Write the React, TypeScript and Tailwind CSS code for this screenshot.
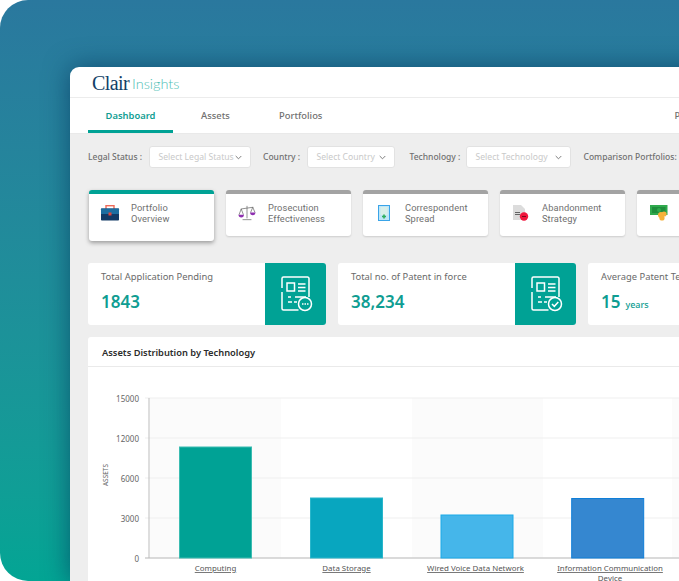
import React from "react";

const Chevron = () => (
  <svg width="7" height="5" viewBox="0 0 7 5" fill="none" stroke="#6f6f6f" strokeWidth="0.9" className="shrink-0">
    <path d="M0.7 1l2.800 2.800L6.300 1" />
  </svg>
);

function Select({ width, text }: { width: string; text: string }) {
  return (
    <div className={`${width} flex h-[22px] shrink-0 items-center justify-between rounded-[3px] border border-[#e2e2e2] bg-white pl-[9px] pr-[8px]`}>
      <span className="whitespace-nowrap text-[8.6px] font-normal text-[#c9c9c9]">{text}</span>
      <Chevron />
    </div>
  );
}

const Briefcase = () => (
  <svg width="20" height="16" viewBox="0 0 20 16">
    <rect x="6" y="0.7" width="8" height="4" fill="none" stroke="#ef6a58" strokeWidth="1.4" />
    <rect x="1" y="3.5" width="18" height="12" rx="0.8" fill="#123a66" />
    <rect x="1" y="3.5" width="18" height="5.5" fill="#1c6da0" />
    <rect x="8.5" y="7.5" width="3" height="3" fill="#e2453c" />
  </svg>
);
const Scales = () => (
  <svg width="18" height="16" viewBox="0 0 20 18">
    <path d="M10 1v14M5 16.5h10M3 4.5l14-2M3.5 4.5L1 11M3.5 4.5L6 11M16.5 2.5L14 8.5M16.5 2.5L19 8.5" stroke="#666" strokeWidth="0.8" fill="none" />
    <path d="M0.5 11h6a3 3 0 0 1-6 0z" fill="#8e2fb0" />
    <path d="M13.5 8.5h6a3 3 0 0 1-6 0z" fill="#8e2fb0" />
  </svg>
);
const Doc = () => (
  <svg width="12" height="16" viewBox="0 0 12 16">
    <rect x="0.5" y="0.5" width="11" height="15" fill="#bfe6f7" stroke="#3aa4e8" strokeWidth="1" />
    <rect x="2.5" y="2" width="7" height="8" fill="#d9efe9" />
    <path d="M6 9.5v4M4 11.5h4" stroke="#2fae5c" strokeWidth="1.6" />
  </svg>
);
const Abandon = () => (
  <svg width="16" height="17" viewBox="0 0 16 17">
    <path d="M0 0h8l4 4v11H0z" fill="#dcdcdc" />
    <path d="M2 7.5h5M2 9.5h5" stroke="#555" strokeWidth="0.9" />
    <circle cx="11" cy="11.5" r="4.2" fill="#f0173d" />
    <path d="M9 11.5h4" stroke="#7a0a1e" strokeWidth="1" />
  </svg>
);
const Money = () => (
  <svg width="18" height="16" viewBox="0 0 18 16">
    <rect x="0" y="0" width="17.5" height="10" fill="#2faa4d" />
    <rect x="2" y="2" width="13.5" height="6" fill="#1f8e3c" />
    <circle cx="9" cy="5" r="2" fill="#2faa4d" />
    <circle cx="11" cy="10" r="3" fill="#f6b23a" />
    <circle cx="14" cy="9" r="2.6" fill="#f6b23a" />
    <circle cx="12" cy="13" r="2.6" fill="#f6b23a" />
  </svg>
);

function ReportIcon({ badge }: { badge: "dots" | "check" }) {
  return (
    <svg width="32" height="36" viewBox="0 0 32 36" fill="none" stroke="#fff" strokeWidth="1.5" className="ml-[3px]">
      <path d="M1 12V2.500a1.500 1.500 0 0 1 1.500-1.500h24a1.500 1.500 0 0 1 1.500 1.500V21M1 16v16.500a1.500 1.500 0 0 0 1.500 1.500h15" />
      <rect x="6" y="7" width="7.500" height="8" />
      <path d="M17 8h7.500M17 11.500h7.500M17 15h7.500" />
      <path d="M7 21h3M14 21h11M7 26h4M13 26h3" />
      <circle cx="24" cy="28" r="6.500" fill="#00a295" />
      {badge === "dots" ? (
        <path d="M21 28h1.500M23.500 28H25M26 28h1.500" strokeWidth="1.500" />
      ) : (
        <path d="M21 28l2.300 2.300 4-4.300" strokeWidth="1.500" />
      )}
    </svg>
  );
}

function TabCard({
  icon,
  lines,
  active,
  iconBox,
}: {
  icon: React.ReactNode;
  lines?: [string, string];
  active?: boolean;
  iconBox: string;
}) {
  return (
    <div
      className={`flex w-[125.500px] shrink-0 items-start self-start rounded-[3px] border-t-4 bg-white ${
        active
          ? "h-[51px] border-[#00a295] shadow-[0_2px_4px_rgba(0,0,0,0.35)]"
          : "h-[46px] border-[#a3a3a3] shadow-[0_1px_2px_rgba(0,0,0,0.14)]"
      }`}
    >
      <div className={`${iconBox} flex h-[38px] w-[42.500px] shrink-0 items-center justify-center`}>{icon}</div>
      {lines && (
        <div className="pt-[8px] font-['Roboto',sans-serif] text-[9.300px] leading-[11px] tracking-[0.1px] text-[#707070]">
          <div>{lines[0]}</div>
          <div>{lines[1]}</div>
        </div>
      )}
    </div>
  );
}

function Kpi({
  title,
  value,
  unit,
  badge,
  width,
}: {
  title: string;
  value: string;
  unit?: string;
  badge?: "dots" | "check";
  width: string;
}) {
  return (
    <div className={`${width} flex h-[62px] shrink-0 justify-between overflow-hidden rounded-[3px] bg-white`}>
      <div className="pl-[13px] pt-[8px]">
        <div className="whitespace-nowrap text-[9.400px] leading-[12px] text-[#6a6a6a]">{title}</div>
        <div className="mt-[9px] whitespace-nowrap text-[17px] font-semibold leading-[20px] text-[#0f9d92]">
          {value}
          {unit && <span className="ml-[5px] text-[9px] font-medium">{unit}</span>}
        </div>
      </div>
      {badge && (
        <div className="flex h-full w-[61px] shrink-0 items-center justify-center bg-[#00a295]">
          <ReportIcon badge={badge} />
        </div>
      )}
    </div>
  );
}

function Chart() {
  const left = 62;
  const bands = [62, 324, 584];
  const grid = [
    [61, "15000"],
    [101, "12000"],
    [141, "6000"],
    [181, "3000"],
    [221, "0"],
  ] as const;
  const bars = [
    { x: 91.5, top: 110, w: 72, fill: "#00a295", stroke: "#3bbcb1" },
    { x: 222.5, top: 161, w: 72, fill: "#08a6bf", stroke: "#29b6cb" },
    { x: 353, top: 178, w: 72, fill: "#45b6ea", stroke: "#1aaae8" },
    { x: 483.7, top: 161.5, w: 72, fill: "#3587d0", stroke: "#0f7ed8" },
  ];
  const fontFamily = "'Noto Sans', sans-serif";
  return (
    <svg width="712" height="215" viewBox="0 0 712 215" className="block">
      <g transform="translate(0,-30)">
        {bands.map((b) => (
          <rect key={b} x={b} y={61} width="131" height="160" fill="#fbfbfb" />
        ))}
        {grid.map(([gy]) => (
          <line key={gy} x1={left - 5} x2="712" y1={gy} y2={gy} stroke="#efefef" strokeWidth="1" />
        ))}
        <line x1={left - 1} x2={left - 1} y1="61" y2="221" stroke="#bdbdbd" />
        <line x1={left - 5} x2="712" y1="221" y2="221" stroke="#bdbdbd" />
        {grid.map(([gy, label]) => (
          <text key={label} x={left - 11} y={gy + 4} textAnchor="end" fontSize="8" fill="#666" fontFamily={fontFamily}>
            {label}
          </text>
        ))}
        <text transform="translate(19.5,138) rotate(-90)" textAnchor="middle" fontSize="6.5" fill="#666" fontFamily={fontFamily}>
          ASSETS
        </text>
        {bars.map((b) => (
          <rect key={b.x} x={b.x} y={b.top} width={b.w} height={221 - b.top} fill={b.fill} stroke={b.stroke} strokeWidth="1" />
        ))}
        {(
          [
            [127.5, "Computing"],
            [258.5, "Data Storage"],
            [387.5, "Wired Voice Data Network"],
            [522, "Information Communication"],
          ] as const
        ).map(([x, t]) => (
          <text key={t} x={x} y="234" textAnchor="middle" fontSize="7.9" fill="#555" textDecoration="underline" fontFamily={fontFamily}>
            {t}
          </text>
        ))}
        <text x="522" y="244" textAnchor="middle" fontSize="7.9" fill="#555" fontFamily={fontFamily}>
          Device
        </text>
      </g>
    </svg>
  );
}

export default function App() {
  return (
    <div className="h-[581px] w-[679px] overflow-hidden bg-white font-['Noto_Sans',sans-serif]">
      <div className="h-[581px] overflow-hidden rounded-l-[28px] bg-gradient-to-b from-[#2a789e] to-[#03a594] pl-[70px] pt-[67px]">
        <div className="w-[800px] overflow-hidden rounded-tl-[9px] bg-white shadow-[0_0_26px_rgba(6,50,90,0.65)]">
          <div className="flex h-[31px] items-start border-b border-[#ececec] pl-[22px]">
            <span className="mt-[4px] font-['Liberation_Serif',serif] text-[20px] leading-[24px] tracking-[-0.6px] text-[#123f68]">Clair</span>
            <span className="ml-[3px] mt-[8px] font-['Lato',sans-serif] text-[14.500px] font-light leading-[18px] text-[#4fc0b5]">Insights</span>
          </div>
          <div className="flex h-[36px] border-b border-[#e9e9e9] pl-[18px] text-[9.400px]">
            <div className="flex h-[35px] w-[85px] items-center justify-center border-b-[3px] border-[#00a295] pt-[4px] font-semibold text-[#0f9d92]">
              Dashboard
            </div>
            <div className="ml-[27px] flex h-[35px] w-[31px] items-center justify-center pt-[2px] font-medium text-[#707070]">Assets</div>
            <div className="ml-[48px] flex h-[35px] items-center pt-[2px] font-medium text-[#707070]">Portfolios</div>
            <div className="ml-[352px] flex h-[35px] items-center pt-[2px] font-medium text-[#707070]">Patents</div>
          </div>

          <div className="bg-[#eeeeee] pl-[18px] pt-[12px]">
            <div className="flex h-[22px] items-center text-[8.500px] font-medium text-[#707070]">
              <span className="w-[60.500px] shrink-0 whitespace-nowrap">Legal Status :</span>
              <Select width="w-[102px]" text="Select Legal Status" />
              <span className="ml-[12.500px] w-[43.500px] shrink-0 whitespace-nowrap">Country :</span>
              <Select width="w-[88px]" text="Select Country" />
              <span className="ml-[15px] w-[56px] shrink-0 whitespace-nowrap">Technology :</span>
              <Select width="w-[105.500px]" text="Select Technology" />
              <span className="ml-[12.500px] shrink-0 whitespace-nowrap">Comparison Portfolios:</span>
            </div>

            <div className="ml-[0.5px] mt-[22px] flex h-[51px] gap-[11.500px]">
              <TabCard active iconBox="pl-[1px]" icon={<Briefcase />} lines={["Portfolio", "Overview"]} />
              <TabCard iconBox="pl-[1px]" icon={<Scales />} lines={["Prosecution", "Effectiveness"]} />
              <TabCard iconBox="pl-0" icon={<Doc />} lines={["Correspondent", "Spread"]} />
              <TabCard iconBox="pl-[1px]" icon={<Abandon />} lines={["Abandonment", "Strategy"]} />
              <TabCard iconBox="pl-[3px]" icon={<Money />} />
            </div>

            <div className="mt-[22px] flex gap-[12px]">
              <Kpi width="w-[238px]" title="Total Application Pending" value="1843" badge="dots" />
              <Kpi width="w-[238px]" title="Total no. of Patent in force" value="38,234" badge="check" />
              <Kpi width="w-[238px]" title="Average Patent Term" value="15" unit="years" />
            </div>

            <div className="mt-[12px] rounded-t-[3px] bg-white">
              <div className="flex h-[30px] items-center border-b border-[#eaeaea] pl-[14px] pt-[2px] text-[9.300px] font-semibold text-[#2c2c2c]">
                Assets Distribution by Technology
              </div>
              <Chart />
            </div>
          </div>
        </div>
      </div>
    </div>
  );
}
